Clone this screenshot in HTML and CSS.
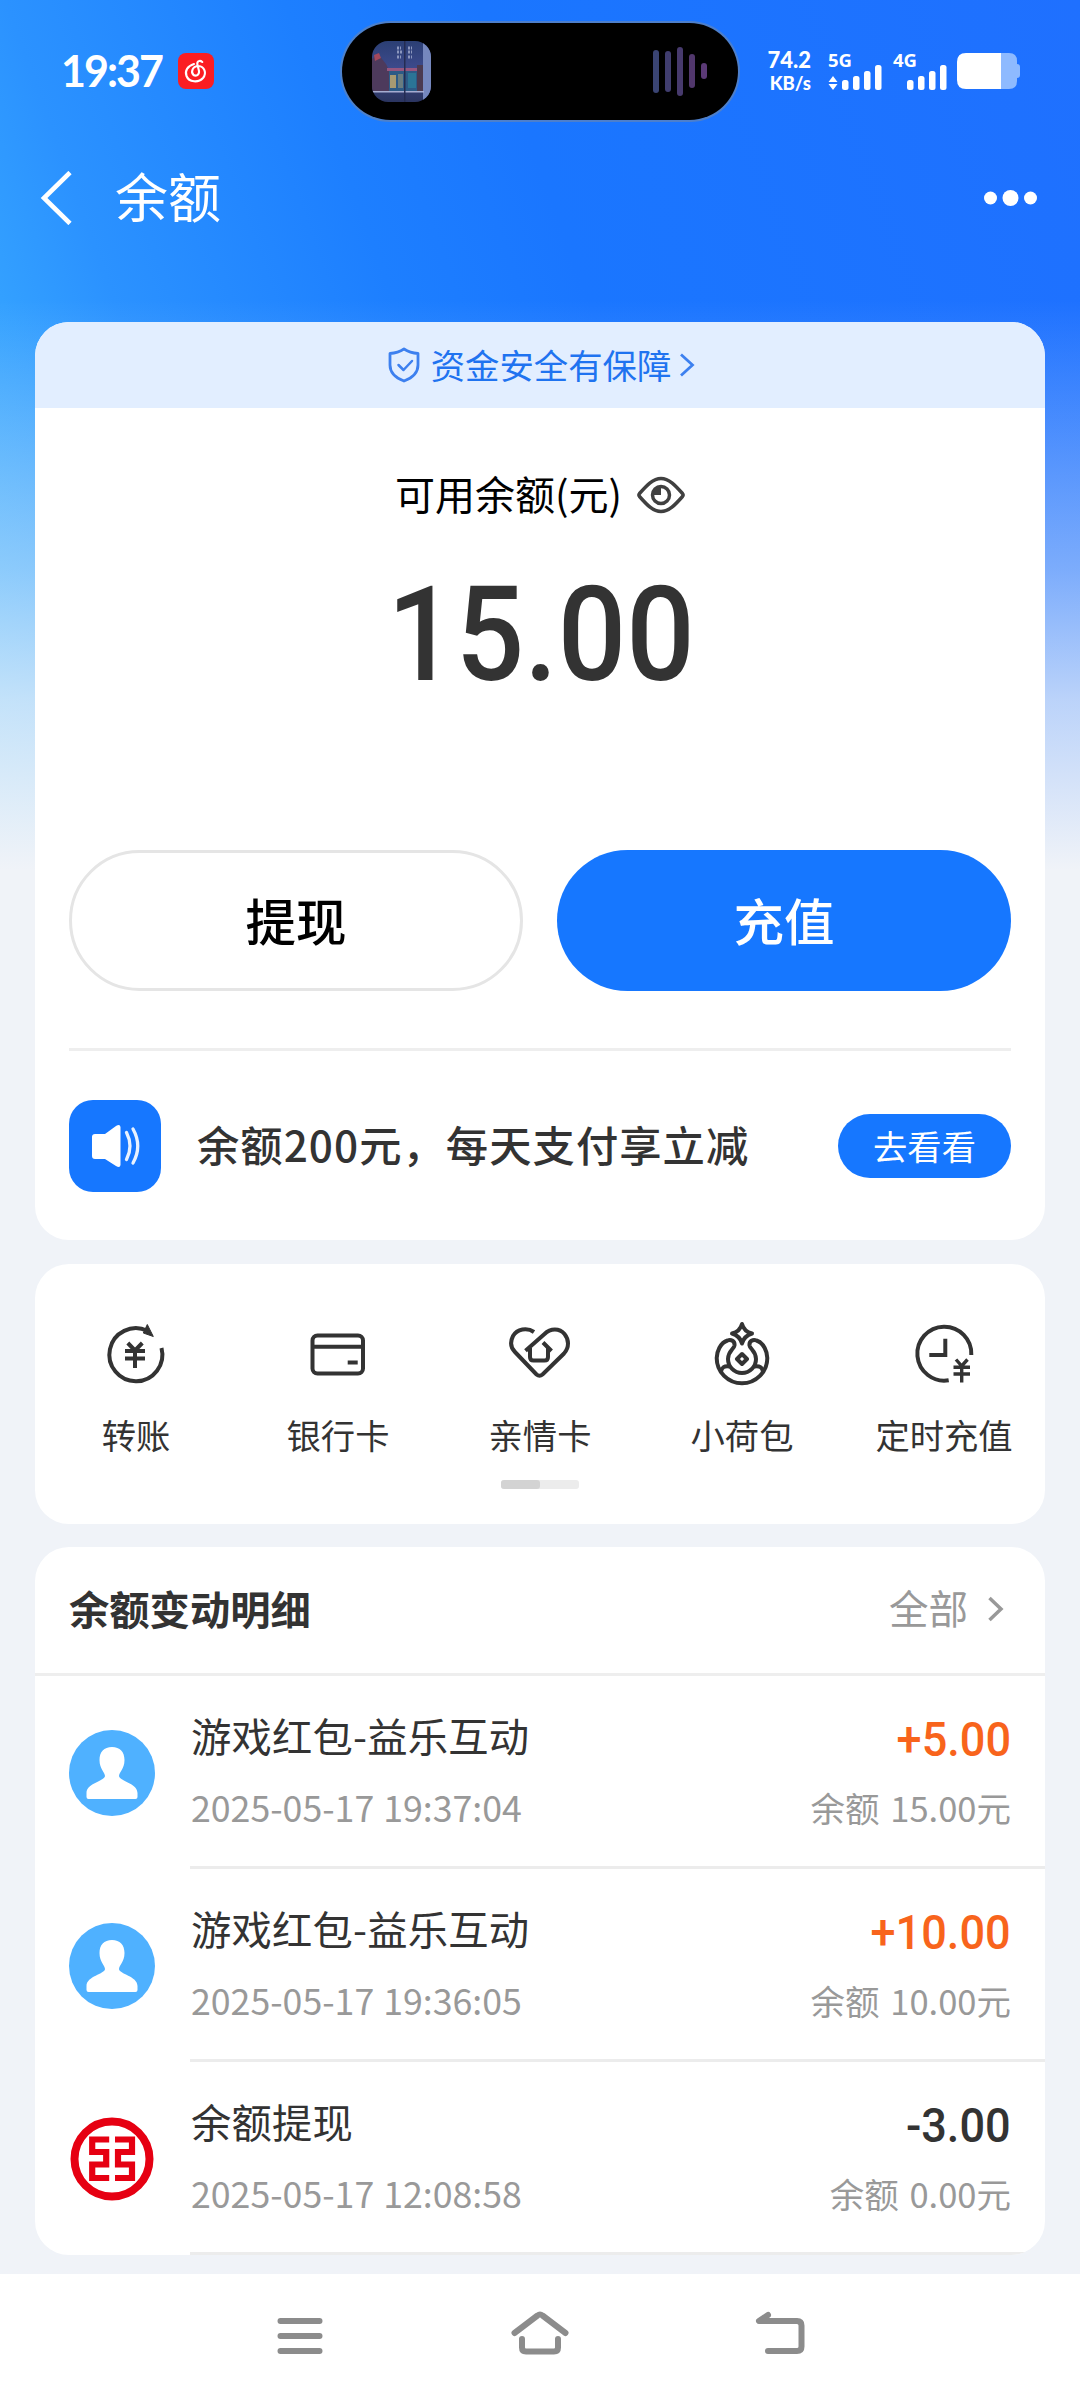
FILE: index.html
```html
<!DOCTYPE html>
<html lang="zh-CN">
<head>
<meta charset="utf-8">
<title>余额</title>
<link rel="stylesheet" href="styles.css">
</head>
<body>
<div class="page">
  <div class="status">
    <span class="clock">19:37</span>
    <svg class="app-badge" width="36" height="36" viewBox="0 0 36 36">
      <rect width="36" height="36" rx="8" fill="#fb1d22"/>
      <path d="M16 11C9.500 13 6.500 18 8.500 23c2.500 6.500 12 7 16.500 2 4-5 1.500-11.500-4.500-12-6 0-8 6-5 9 2.500 1.500 6 0 5.500-4L19.300 11c-.300-3 2.700-4 5-2" fill="none" stroke="#fff" stroke-width="2.100" stroke-linecap="round"/>
    </svg>
    <div class="island">
      <svg width="59" height="61" viewBox="0 0 59 61">
        <defs>
          <clipPath id="cover"><rect width="59" height="61" rx="16"/></clipPath>
          <linearGradient id="sky" x1="0" y1="0" x2="0" y2="1"><stop offset="0" stop-color="#2b3f74"/><stop offset=".45" stop-color="#3d4a8c"/><stop offset="1" stop-color="#2b3560"/></linearGradient>
        </defs>
        <g clip-path="url(#cover)">
          <rect width="59" height="61" fill="url(#sky)"/>
          <path d="M0 18l6-5 8 10 4 8v20H0z" fill="#4d3a5c"/>
          <path d="M2 14l5-2 2 5-6 3z" fill="#a3485c"/>
          <rect x="15" y="27" width="30" height="3" fill="#96567f"/>
          <rect x="17" y="30" width="28" height="20" fill="#2d5a86"/>
          <rect x="18" y="34" width="6" height="13" fill="#a89a72"/>
          <rect x="26" y="33" width="5" height="14" fill="#697c80"/>
          <rect x="36" y="32" width="8" height="15" fill="#2b7596"/>
          <rect x="45" y="24" width="6" height="26" fill="#4b3a50"/>
          <path d="M25 7h4M25 11h5M25 16h4M36 7h4M36 11h4M36 16h4" stroke="#8b96bd" stroke-width="3" stroke-dasharray="2 1"/>
          <rect x="51" width="8" height="61" fill="#7587bd"/>
          <rect y="50" width="52" height="1.500" fill="#a5acd0"/>
          <rect x="32" width="1.500" height="61" fill="#242c52"/>
        </g>
      </svg>
      <svg width="54" height="50" viewBox="0 0 54 50">
        <rect x="0" y="4" width="6" height="43" rx="3" fill="#3a4473"/>
        <rect x="12" y="5" width="6" height="41" rx="3" fill="#403d6e"/>
        <rect x="24" y="1" width="6" height="49" rx="3" fill="#473a6d"/>
        <rect x="36" y="8" width="6" height="34" rx="3" fill="#51376c"/>
        <rect x="48" y="17" width="6" height="16" rx="3" fill="#5b3a76"/>
      </svg>
    </div>
    <div class="speed"><span class="speed-num">74.2</span><span class="speed-unit">KB/s</span></div>
    <div class="signal signal-5g">
      <span>5G</span>
      <svg width="54" height="26" viewBox="0 0 54 26" fill="#fff">
        <path d="M5 12l4.500 6h-9zM5 26l4.500-6h-9z"/>
        <rect x="14" y="16" width="6.500" height="10" rx="2.500"/><rect x="25" y="12" width="6.500" height="14" rx="2.500"/><rect x="36" y="7" width="6.500" height="19" rx="2.500"/><rect x="47" y="1" width="6.500" height="25" rx="2.500"/>
      </svg>
    </div>
    <div class="signal signal-4g">
      <span>4G</span>
      <svg width="54" height="26" viewBox="0 0 54 26" fill="#fff">
        <rect x="14" y="16" width="6.500" height="10" rx="2.500"/><rect x="25" y="12" width="6.500" height="14" rx="2.500"/><rect x="36" y="7" width="6.500" height="19" rx="2.500"/><rect x="47" y="1" width="6.500" height="25" rx="2.500"/>
      </svg>
    </div>
    <svg class="battery" width="63" height="36" viewBox="0 0 63 36">
      <path d="M44 0h8q8 0 8 8v3q3 0 3 3v8q0 3-3 3v3q0 8-8 8h-8z" fill="#8ebaff"/>
      <path d="M44 0H9Q0 0 0 9v18q0 9 9 9h35z" fill="#fff"/>
    </svg>
  </div>

  <header class="topbar">
    <svg width="34" height="54" viewBox="0 0 34 54"><path d="M30 1.500L4 27l26 25.500" fill="none" stroke="#fff" stroke-width="4.600"/></svg>
    <h1>余额</h1>
    <svg class="more" width="54" height="16" viewBox="0 0 54 16" fill="#fff"><circle cx="6.500" cy="8" r="6.500"/><circle cx="26.500" cy="8" r="8"/><circle cx="46.500" cy="8" r="6.500"/></svg>
  </header>

  <main class="content">
    <section class="card balance">
      <div class="safe">
        <svg width="32" height="36" viewBox="0 0 32 36" fill="none" stroke="#3d80ef" stroke-width="2.800" stroke-linejoin="round" stroke-linecap="round"><path d="M16 2q6 4 14 4.500V18c0 8-6 13-14 16C8 31 2 26 2 18V6.500Q10 6 16 2z"/><path d="M10.500 18l5 5 8.500-9" stroke-width="2.500"/></svg>
        <span>资金安全有保障</span>
        <svg width="16" height="24" viewBox="0 0 16 24"><path d="M2 1.500L13.500 12 2 22.500" fill="none" stroke="#3d80ef" stroke-width="2.800"/></svg>
      </div>
      <div class="label">
        <span>可用余额(元)</span>
        <svg width="48" height="38" viewBox="0 0 48 38" fill="none" stroke="#404040" stroke-width="3.500"><path d="M2.500 17.500C10 9 16 2.500 24 2.500S38 9 45.500 17.500q1.200 1.500 0 3C38 29 32 35.500 24 35.500S10 29 2.500 20.500q-1.200-1.500 0-3z"/><circle cx="24" cy="19" r="8.500"/><path d="M24 11v8h-8A8 8 0 0 1 24 11z" fill="#404040" stroke="none"/></svg>
      </div>
      <div class="amount"><span>15.00</span></div>
      <div class="actions">
        <button class="btn btn-plain">提现</button>
        <button class="btn btn-primary">充值</button>
      </div>
      <div class="promo">
        <svg width="92" height="92" viewBox="0 0 92 92">
          <rect width="92" height="92" rx="24" fill="#1677ff"/>
          <path d="M26 34h10l11-8q4-2.500 4.500 1v38q-.500 3.500-4.500 1l-11-7H26q-3 0-3-3V37q0-3 3-3z" fill="#fff"/>
          <path d="M57.500 32.500q7 13.500 0 27M64 29q9.500 17 0 34" fill="none" stroke="#e8f2ff" stroke-width="3.300" stroke-linecap="round"/>
        </svg>
        <span class="promo-text">余额200元，每天支付享立减</span>
        <button class="pill">去看看</button>
      </div>
    </section>

    <section class="card tools">
      <div class="tool-row">
        <div class="tool">
          <svg width="60" height="60" viewBox="0.700 0 60 60"><path d="M56.200 24A26.500 26.500 0 1 1 42 6.800"/><path d="M42 .500l6 12-10-3.500z" fill="#333" stroke-width="1"/><path d="M22.500 19l7.200 7.500L37 19M19.700 27h20M19.700 34.500h20M29.700 26v18"/></svg>
          <span>转账</span>
        </div>
        <div class="tool">
          <svg width="60" height="60" viewBox="0 0 60 60"><rect x="4.500" y="11.500" width="50.500" height="38" rx="5"/><path d="M4.500 22.800H55M39.700 38.500h10"/></svg>
          <span>银行卡</span>
        </div>
        <div class="tool">
          <svg width="60" height="60" viewBox="0 0 60 60"><path d="M24 8C17 3 7 5 3 12c-3 6-2 12 2 16l21.500 22.500q3 2.500 6 0L54 29.500c5.500-6 5-14 .5-19.500-5-6-14-6-20 0L15.500 26.700"/><path d="M20 24v9q0 3.500 3.500 3.500h11q3.500 0 3.500-3.500v-9M33 18.500l8.500 8.500"/></svg>
          <span>亲情卡</span>
        </div>
        <div class="tool">
          <svg width="60" height="60" viewBox="0 0 60 60" stroke-linejoin="round"><path d="M22.500 21.500C23 17 19 15 15.500 16.500 8 19 4.700 28 4.700 34a25.300 25.300 0 0 0 50.600 0c0-6-3.300-15-10.800-17.500-3.500-1.500-7.500.5-7 5 .5 3.500 6.500 5.500 6.500 13.500a14 14 0 0 1-28 0c0-8 6-10 6.500-13.500z"/><path d="M9 48c.500-4.500 3.500-6.500 8.500-5.500M51 48c-.500-4.500-3.500-6.500-8.500-5.500M30 30l5 5-5 5-5-5z"/><path d="M30 0q2 7.500 10 9.500-8 2.500-10 10-2-7.500-10-10 8-2 10-9.500z"/></svg>
          <span>小荷包</span>
        </div>
        <div class="tool">
          <svg width="60" height="60" viewBox="0 0 60 60"><path d="M57.300 31A27 27 0 1 0 34.700 56.300M31.300 14.700V31h-16"/><path d="M42 35.500l5.700 6.500 5.800-6.500M39.500 43.300H56M39.500 50H56M47.700 42v16.500" stroke-width="3.400"/></svg>
          <span>定时充值</span>
        </div>
      </div>
      <div class="pager"><i></i></div>
    </section>

    <section class="card history">
      <div class="history-head">
        <h2>余额变动明细</h2>
        <span class="all">全部</span>
        <svg width="18" height="26" viewBox="0 0 18 26"><path d="M2.500 2L14 13 2.500 24" fill="none" stroke="#999" stroke-width="3.500"/></svg>
      </div>
      <div class="entry">
        <svg width="86" height="86" viewBox="0 0 86 86"><circle cx="43" cy="43" r="43" fill="#4fb1ff"/><path d="M43 17c8 0 12.500 5 12.500 13 0 9-5.500 12.500-5.500 16 0 5 18.500 7 18.500 17v4q0 2-2 2h-47q-2 0-2-2v-4c0-10 18.500-12 18.500-17 0-3.500-5.500-7-5.500-16 0-8 4.500-13 12.500-13z" fill="#fff"/></svg>
        <div class="detail">
          <div class="line"><span class="name">游戏红包-益乐互动</span><span class="sum in">+5.00</span></div>
          <div class="line sub"><span>2025-05-17 19:37:04</span><span>余额 15.00元</span></div>
        </div>
      </div>
      <div class="entry">
        <svg width="86" height="86" viewBox="0 0 86 86"><circle cx="43" cy="43" r="43" fill="#4fb1ff"/><path d="M43 17c8 0 12.500 5 12.500 13 0 9-5.500 12.500-5.500 16 0 5 18.500 7 18.500 17v4q0 2-2 2h-47q-2 0-2-2v-4c0-10 18.500-12 18.500-17 0-3.500-5.500-7-5.500-16 0-8 4.500-13 12.500-13z" fill="#fff"/></svg>
        <div class="detail">
          <div class="line"><span class="name">游戏红包-益乐互动</span><span class="sum in">+10.00</span></div>
          <div class="line sub"><span>2025-05-17 19:36:05</span><span>余额 10.00元</span></div>
        </div>
      </div>
      <div class="entry">
        <svg width="86" height="86" viewBox="0 0 86 86" fill="none" stroke="#e60012"><circle cx="43" cy="43" r="37.500" stroke-width="8"/><path d="M40.200 23.500H23.200V36H37.200V48.500H23.200V62H40.200M46 23.500H63V36H49V48.500H63V62H46" stroke-width="6.200"/></svg>
        <div class="detail">
          <div class="line"><span class="name">余额提现</span><span class="sum">-3.00</span></div>
          <div class="line sub"><span>2025-05-17 12:08:58</span><span>余额 0.00元</span></div>
        </div>
      </div>
    </section>
  </main>

  <nav class="sysnav">
    <svg width="60" height="50" viewBox="0 0 60 50"><path d="M10.500 12h39M10.500 27h39M10.500 42h39"/></svg>
    <svg width="60" height="50" viewBox="0 0 60 50"><path d="M4.500 24L27.500 6.500q2.500-2 5 0L55.500 24M12 30v8.500q0 4 4 4h28q4 0 4-4V30" stroke-linejoin="round"/></svg>
    <svg width="60" height="50" viewBox="0 0 60 50"><path d="M18 6L9 12h38q4.500 0 4.500 4.500v21q0 4.500-4.500 4.500H18" stroke-linejoin="round"/></svg>
  </nav>
</div>
</body>
</html>
```
FILE: styles.css
```css
* { box-sizing: border-box; }

body {
  margin: 0;
  font-family: "Noto Sans CJK SC", sans-serif;
  color: #333;
}

.page {
  width: 1080px;
  height: 2400px;
  display: flex;
  flex-direction: column;
  overflow: hidden;
  background:
    linear-gradient(to bottom, rgba(240, 243, 248, 0) 300px, rgba(240, 243, 248, .45) 570px, rgba(240, 243, 248, .75) 700px, #f0f3f8 870px) 0 0 / 100% 870px no-repeat,
    linear-gradient(70deg, #42b6ff 0, #33a0ff 15%, #2b92ff 23%, #1d7fff 43%, #1a76ff 57%, #1f70ff 100%) 0 0 / 100% 870px no-repeat,
    #f0f3f8;
}

svg { display: block; flex: none; }

/* status bar */
.status {
  height: 142px;
  flex: none;
  display: flex;
  align-items: center;
  padding-left: 61px;
  color: #fff;
  font-family: Lato, "Noto Sans", sans-serif;
  font-weight: 700;
}
.clock { width: 117px; font-size: 43px; letter-spacing: -2px; line-height: 50px; white-space: nowrap; }
.island {
  width: 396px;
  height: 97px;
  margin-left: 128px;
  padding: 0 31px 0 30px;
  display: flex;
  align-items: center;
  justify-content: space-between;
  border-radius: 49px;
  background: #000;
  box-shadow: 0 0 0 2px rgba(90, 130, 190, .8);
}
.speed {
  width: 46px;
  margin-left: 27px;
  display: flex;
  flex-direction: column;
  align-items: flex-end;
  white-space: nowrap;
  font-weight: 900;
}
.speed-num { font-size: 22px; line-height: 24px; }
.speed-unit { font-size: 18.500px; line-height: 22px; }
.signal {
  width: 54px;
  height: 38px;
  display: flex;
  flex-direction: column;
  font: 700 18.500px/16px "Noto Sans", sans-serif;
}
.signal svg { margin-top: -4px; }
.signal-5g { margin-left: 17px; }
.signal-4g { margin-left: 11px; }
.battery { margin-left: 10px; }

/* title bar */
.topbar {
  height: 112px;
  flex: none;
  display: flex;
  align-items: center;
  padding: 0 42px 0 40px;
  color: #fff;
}
.topbar h1 {
  margin: 0 0 6px 41px;
  font-size: 53px;
  line-height: 60px;
  font-weight: 400;
}
.more { margin-left: auto; }

/* cards */
.content {
  flex: 1;
  padding: 68px 35px 0;
}
.card {
  border-radius: 34px;
  background: #fff;
  overflow: hidden;
}
.balance { height: 918px; }
.safe {
  height: 86px;
  padding-left: 3px;
  display: flex;
  align-items: center;
  justify-content: center;
  gap: 11px;
  background: #e2eeff;
  color: #1f73f0;
  font-size: 34.400px;
}
.safe span { padding-bottom: 3px; }
.safe svg:last-child { margin-left: -3px; }
.label {
  height: 60px;
  margin-top: 57px;
  display: flex;
  align-items: center;
  justify-content: center;
  gap: 15px;
  color: #000;
  font-size: 40px;
}
.label span { padding-bottom: 5px; }
.amount {
  height: 120px;
  margin-top: 50px;
  padding-left: 3px;
  text-align: center;
  font: 500 131px/120px Roboto, sans-serif;
}
.amount span { display: inline-block; transform: scaleX(.92); }
.actions {
  margin: 155px 34px 0;
  display: grid;
  grid-template-columns: 1fr 1fr;
  gap: 34px;
}
.btn {
  height: 141px;
  padding: 0 0 2px;
  border: 0;
  border-radius: 71px;
  font: 500 50.500px/1 "Noto Sans CJK SC", sans-serif;
}
.btn-plain { border: 3px solid #e5e5e5; background: #fff; color: #000; }
.btn-primary { background: #1677ff; color: #fff; }
.promo {
  margin: 57px 34px 0;
  padding-top: 49px;
  border-top: 3px solid #eee;
  display: flex;
  align-items: center;
}
.promo-text { margin-left: 36px; padding-bottom: 4px; font-size: 42.300px; letter-spacing: 1.050px; font-weight: 500; line-height: 60px; white-space: nowrap; }
.pill {
  width: 173px;
  height: 64px;
  margin-left: auto;
  padding: 0 0 2px;
  border: 0;
  border-radius: 32px;
  background: #1677ff;
  color: #fff;
  font: 400 34.300px/60px "Noto Sans CJK SC", sans-serif;
}

/* shortcuts */
.tools { height: 260px; margin-top: 24px; padding-top: 60px; }
.tool-row { display: grid; grid-template-columns: repeat(5, 1fr); }
.tool {
  display: flex;
  flex-direction: column;
  align-items: center;
  gap: 25px;
  font-size: 34.300px;
  line-height: 50px;
  white-space: nowrap;
}
.tool svg { overflow: visible; fill: none; stroke: #333; stroke-width: 4px; }
.pager {
  width: 78px;
  height: 9px;
  margin: 21px auto 0;
  border-radius: 3px;
  background: #ececec;
}
.pager i { display: block; width: 39px; height: 9px; border-radius: 3px; background: #d3d3d3; }

/* history */
.history { height: 708px; margin-top: 23px; }
.history-head {
  height: 129px;
  padding: 0 40px 3px 34px;
  display: flex;
  align-items: center;
  border-bottom: 3px solid #eee;
}
.history-head h2 { margin: 0; padding-bottom: 2px; font-size: 40.300px; line-height: 60px; font-weight: 700; }
.all { margin-left: auto; margin-right: 19px; padding-bottom: 4px; color: #999; font-size: 39.500px; }
.entry {
  height: 193px;
  padding-left: 34px;
  display: flex;
  align-items: center;
  gap: 35px;
}
.detail {
  flex: 1;
  height: 193px;
  padding: 29px 34px 0 1px;
  border-bottom: 3px solid #ececec;
}
.line { height: 72px; display: flex; justify-content: space-between; line-height: 60px; white-space: nowrap; }
.name { font-size: 40.300px; letter-spacing: .2px; }
.sum { font: 500 48.500px/70px Roboto, sans-serif; transform: scaleX(.93); transform-origin: right; }
.in { color: #f8641c; }
.sub { color: #999; font-size: 34.500px; word-spacing: 3px; }
.sub span:first-child { font-size: 35.700px; word-spacing: 1px; }

/* system navigation */
.sysnav {
  height: 126px;
  flex: none;
  padding-top: 35px;
  display: flex;
  justify-content: center;
  gap: 180px;
  background: #fff;
}
.sysnav svg { fill: none; stroke: #8c8c8c; stroke-width: 6px; stroke-linecap: round; }
```
